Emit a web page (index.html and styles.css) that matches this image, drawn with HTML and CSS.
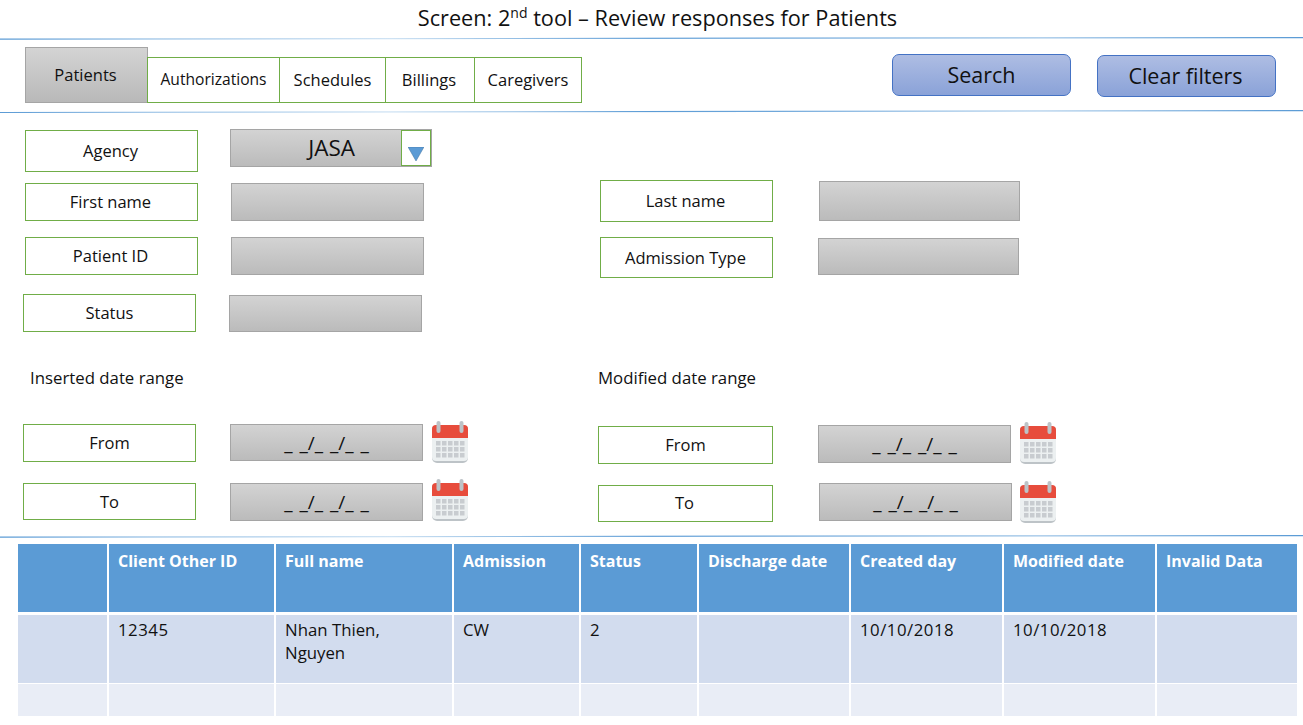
FILE: index.html
```html
<!DOCTYPE html>
<html lang="en">
<head>
<meta charset="utf-8">
<title>Review responses for Patients</title>
<link rel="stylesheet" href="styles.css">
</head>
<body>
<svg class="defs" width="0" height="0" aria-hidden="true">
  <defs>
    <linearGradient id="rule">
      <stop offset="0" class="stop-a"/>
      <stop offset="0.12" class="stop-b"/>
      <stop offset="0.3" class="stop-c"/>
      <stop offset="0.5" class="stop-a"/>
      <stop offset="0.8" class="stop-b"/>
      <stop offset="1" class="stop-a"/>
    </linearGradient>
    <symbol id="cal" viewBox="0 0 38 44">
      <path d="M1 9a3 3 0 0 1 3-3h30a3 3 0 0 1 3 3v29a5 5 0 0 1-5 5H6a5 5 0 0 1-5-5z" fill="#bdc3c7"/>
      <path d="M1 18h36v19a4 4 0 0 1-4 4H5a4 4 0 0 1-4-4z" fill="#ecf0f1"/>
      <path d="M1 18V9a4 4 0 0 1 4-4h28a4 4 0 0 1 4 4v9z" fill="#e74c3c"/>
      <rect x="5.500" y="1" width="4" height="12" rx="2" fill="#bdc3c7"/>
      <rect x="28.500" y="1" width="4" height="12" rx="2" fill="#bdc3c7"/>
      <g fill="#c8ccd0">
        <rect x="5" y="21" width="4.500" height="4.500"/><rect x="11" y="21" width="4.500" height="4.500"/><rect x="17" y="21" width="4.500" height="4.500"/><rect x="23" y="21" width="4.500" height="4.500"/><rect x="29" y="21" width="4.500" height="4.500"/>
        <rect x="5" y="27" width="4.500" height="4.500"/><rect x="11" y="27" width="4.500" height="4.500"/><rect x="17" y="27" width="4.500" height="4.500"/><rect x="23" y="27" width="4.500" height="4.500"/><rect x="29" y="27" width="4.500" height="4.500"/>
        <rect x="5" y="33" width="4.500" height="4.500"/><rect x="11" y="33" width="4.500" height="4.500"/><rect x="17" y="33" width="4.500" height="4.500"/><rect x="23" y="33" width="4.500" height="4.500"/><rect x="29" y="33" width="4.500" height="4.500"/>
      </g>
    </symbol>
  </defs>
</svg>

<h1 class="title">Screen: 2<sup>nd</sup> tool – Review responses for Patients</h1>
<svg class="rule" viewBox="0 0 1303 3" preserveAspectRatio="none" aria-hidden="true"><polygon points="0,1.500 1303,0 1303,1.200 0,2.700" fill="url(#rule)"/></svg>

<header class="toolbar">
  <nav class="tabs">
    <a class="tab tab-active">Patients</a>
    <a class="tab tab-auth">Authorizations</a>
    <a class="tab tab-sched">Schedules</a>
    <a class="tab tab-bill">Billings</a>
    <a class="tab tab-care">Caregivers</a>
  </nav>
  <div class="actions">
    <button class="btn btn-search">Search</button>
    <button class="btn btn-clear">Clear filters</button>
  </div>
</header>
<svg class="rule" viewBox="0 0 1303 3" preserveAspectRatio="none" aria-hidden="true"><polygon points="0,2 1303,0 1303,1.200 0,3" fill="url(#rule)"/></svg>

<section class="form">
  <div class="col col-left">
    <div class="row row-agency">
      <label class="lbl lbl-agency">Agency</label>
      <div class="select">
        <span class="select-value">JASA</span>
        <span class="select-arrow"><svg class="tri" viewBox="0 0 16 14"><polygon points="0,0 16,0 8,14" fill="#5b9bd5" stroke="#41719c" stroke-width="0.500"/></svg></span>
      </div>
    </div>
    <div class="row row-first">
      <label class="lbl">First name</label>
      <div class="field"></div>
    </div>
    <div class="row row-pid">
      <label class="lbl">Patient ID</label>
      <div class="field"></div>
    </div>
    <div class="row row-status">
      <label class="lbl">Status</label>
      <div class="field field-status"></div>
    </div>
    <p class="caption caption-left">Inserted date range</p>
    <div class="row row-date row-from-l">
      <label class="lbl lbl-date">From</label>
      <div class="field date field-from-l">_ _/_ _/_ _</div>
      <svg class="cal"><use href="#cal"/></svg>
    </div>
    <div class="row row-date row-to-l">
      <label class="lbl lbl-date lbl-to-l">To</label>
      <div class="field date field-to-l">_ _/_ _/_ _</div>
      <svg class="cal"><use href="#cal"/></svg>
    </div>
  </div>

  <div class="col col-right">
    <div class="row row-last">
      <label class="lbl lbl-last">Last name</label>
      <div class="field field-last"></div>
    </div>
    <div class="row row-adm">
      <label class="lbl lbl-adm">Admission Type</label>
      <div class="field field-adm"></div>
    </div>
    <p class="caption caption-right">Modified date range</p>
    <div class="row row-date row-from-r">
      <label class="lbl lbl-from-r">From</label>
      <div class="field date field-from-r">_ _/_ _/_ _</div>
      <svg class="cal"><use href="#cal"/></svg>
    </div>
    <div class="row row-date row-to-r">
      <label class="lbl lbl-to-r">To</label>
      <div class="field date field-to-r">_ _/_ _/_ _</div>
      <svg class="cal"><use href="#cal"/></svg>
    </div>
  </div>
</section>
<svg class="rule" viewBox="0 0 1303 3" preserveAspectRatio="none" aria-hidden="true"><polygon points="0,1.500 1303,0 1303,1.200 0,2.700" fill="url(#rule)"/></svg>

<table class="grid">
  <thead>
    <tr>
      <th></th><th>Client Other ID</th><th>Full name</th><th>Admission</th><th>Status</th><th>Discharge date</th><th>Created day</th><th>Modified date</th><th>Invalid Data</th>
    </tr>
  </thead>
  <tbody>
    <tr class="row-odd">
      <td></td><td class="num">12345</td><td>Nhan Thien,<br>Nguyen</td><td>CW</td><td>2</td><td></td><td class="num">10/10/2018</td><td class="num">10/10/2018</td><td></td>
    </tr>
    <tr class="row-even">
      <td></td><td></td><td></td><td></td><td></td><td></td><td></td><td></td><td></td>
    </tr>
  </tbody>
</table>
</body>
</html>
```
FILE: styles.css
```css
* { box-sizing: border-box; }
html, body { margin: 0; padding: 0; }
body {
  width: 1303px;
  background: #fff;
  color: #111;
  font-family: "Open Sans", "Noto Sans", sans-serif;
  font-size: 16.500px;
}
.defs { position: absolute; }
.stop-a { stop-color: #5b9bd5; }
.stop-b { stop-color: #9cc3e6; }
.stop-c { stop-color: #c9dff2; }

.title {
  margin: 0;
  height: 37px;
  padding-top: 4px;
  padding-left: 12px;
  text-align: center;
  font-size: 21.700px;
  font-weight: 400;
  line-height: 28px;
}
.title sup { font-size: 14px; line-height: 0; }
.rule { display: block; width: 1303px; height: 3px; }

.toolbar {
  display: flex;
  justify-content: space-between;
  height: 70px;
  padding: 7px 27px 0 25px;
}
.tabs { display: flex; align-items: flex-end; height: 56px; }
.tab {
  display: flex;
  align-items: center;
  justify-content: center;
  height: 46px;
  padding-bottom: 2px;
  background: #fff;
  border: 1px solid #70ad47;
  margin-left: -1px;
}
.tab-active {
  width: 123px;
  height: 56px;
  margin-left: 0;
  padding-bottom: 1px;
  padding-right: 2px;
  border: 1.500px solid #a5a5a5;
  background: linear-gradient(#d4d4d4, #b9b9b9);
}
.tab-auth { width: 133px; font-size: 15.600px; }
.tab-sched { width: 107px; }
.tab-bill { width: 90px; padding-right: 2px; }
.tab-care { width: 108px; }

.actions { display: flex; gap: 26px; }
.btn {
  width: 179px;
  height: 42px;
  margin-top: 7px;
  padding: 0 0 2px;
  border: 1px solid #4472c4;
  border-radius: 7px;
  background: linear-gradient(#aebde3, #8aa2d8);
  color: #111;
  font-family: inherit;
  font-size: 21.500px;
}
.btn-clear { margin-top: 8px; padding-right: 2px; }

.form { display: flex; height: 422px; }
.col { display: flex; flex-direction: column; }
.col-left { width: 598px; padding-left: 23px; }
.col-right { flex: 1; }

.row { display: flex; align-items: flex-start; }
.lbl {
  display: flex;
  align-items: center;
  justify-content: center;
  flex: none;
  width: 173px;
  height: 38px;
  padding: 0 2px 2px 0;
  background: #fff;
  border: 1px solid #70ad47;
}
.row-status .lbl, .row-date .lbl { padding-right: 0; }
.field {
  flex: none;
  width: 193px;
  height: 38px;
  margin-left: 33px;
  border: 1.500px solid #a5a5a5;
  background: linear-gradient(#d3d3d3, #bbbbbb);
}
.date {
  display: flex;
  align-items: center;
  justify-content: center;
  font-size: 19px;
  word-spacing: 2px;
}
.cal { flex: none; width: 38px; height: 44px; margin-left: 8px; }

.row-agency { margin-top: 16px; margin-left: 2px; height: 43px; }
.lbl-agency { height: 42px; margin-top: 1px; }
.select {
  display: flex;
  width: 202px;
  height: 38px;
  margin-left: 32px;
  border: 1.500px solid #a5a5a5;
  background: linear-gradient(#d3d3d3, #bbbbbb);
}
.select-value {
  width: 172px;
  padding-left: 31px;
  text-align: center;
  font-size: 22.500px;
  line-height: 36px;
}
.select-arrow {
  display: block;
  width: 30px;
  height: 36px;
  padding: 16px 0 0 6px;
  background: #fff;
  border: 1.500px solid #70ad47;
}
.tri { display: block; width: 16px; height: 14px; }

.row-first { margin-top: 11px; margin-left: 2px; }
.row-pid { margin-top: 16px; margin-left: 2px; }
.row-status { margin-top: 19px; }
.field-status { height: 37px; margin-top: 1px; }

.caption { margin: 0; height: 20px; line-height: 20px; font-size: 16.800px; }
.caption-left { margin-top: 36px; padding-left: 7px; }
.caption-right { margin-top: 90px; }

.row-date { height: 44px; }
.lbl-date { margin-top: 4px; }
.row-from-l { margin-top: 32px; }
.field-from-l { margin-left: 34px; margin-top: 4px; height: 37px; }
.row-to-l { margin-top: 14px; }
.row-to-l .lbl { margin-top: 5px; height: 37px; padding-bottom: 0; }
.field-to-l { margin-left: 34px; margin-top: 5px; }

.row-last { margin-top: 67px; padding-left: 2px; }
.lbl-last { height: 42px; }
.field-last { width: 201px; height: 40px; margin-left: 46px; margin-top: 1px; }
.row-adm { margin-top: 15px; padding-left: 2px; }
.lbl-adm { height: 41px; padding-bottom: 0; }
.field-adm { width: 201px; height: 37px; margin-left: 45px; margin-top: 1px; }

.row-from-r { margin-top: 33px; }
.lbl-from-r { width: 175px; margin-top: 5px; }
.field-from-r { margin-left: 45px; margin-top: 4px; }
.row-to-r { margin-top: 15px; height: 45px; }
.row-to-r .lbl-to-r { width: 175px; margin-top: 5px; height: 37px; padding-right: 2px; }
.field-to-r { margin-left: 46px; margin-top: 3px; }
.row-to-r .cal { margin-left: 7px; }

.grid {
  width: 1279px;
  margin: 6px 0 0 18px;
  table-layout: fixed;
  border-collapse: separate;
  border-spacing: 0;
}
.grid th, .grid td {
  padding: 5px 4px 0 9px;
  border-right: 2px solid #fff;
  text-align: left;
  vertical-align: top;
  line-height: 23px;
}
.grid th:last-child, .grid td:last-child { border-right: 0; }
.grid th:nth-child(1) { width: 91px; }
.grid th:nth-child(2) { width: 167px; }
.grid th:nth-child(3) { width: 178px; }
.grid th:nth-child(4) { width: 127px; }
.grid th:nth-child(5) { width: 118px; }
.grid th:nth-child(6) { width: 152px; }
.grid th:nth-child(7) { width: 153px; }
.grid th:nth-child(8) { width: 153px; }
.grid th:nth-child(9) { width: 140px; }
.grid th {
  height: 71px;
  padding-top: 6px;
  background: #5b9bd5;
  background-clip: padding-box;
  border-bottom: 3px solid #fff;
  color: #fff;
  font-size: 16px;
  font-weight: 700;
}
.grid td { font-size: 16.800px; }
.grid .num { letter-spacing: 0.500px; }
.row-odd td {
  height: 69px;
  padding-top: 3px;
  background: #d2dcee;
  border-bottom: 1px solid #fff;
}
.row-even td { height: 32px; background: #e9edf6; }
```
